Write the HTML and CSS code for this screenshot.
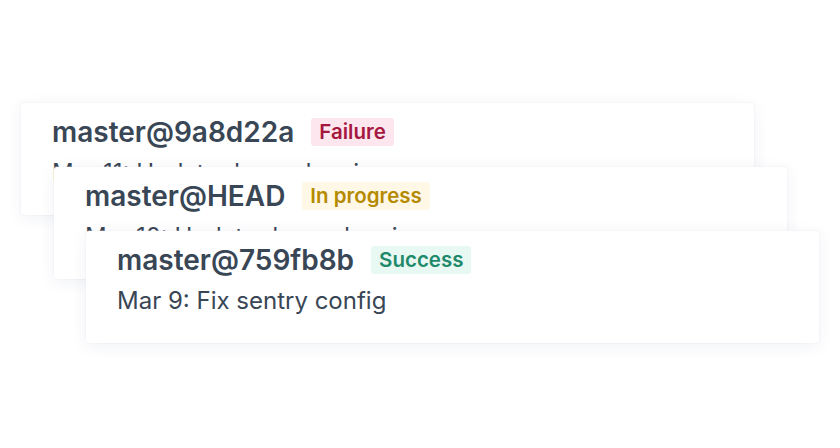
FILE: index.html
```html
<!DOCTYPE html>
<html>
<head>
<meta charset="utf-8">
<link rel="stylesheet" href="styles.css">
</head>
<body>
<div class="stack">
  <div class="card">
    <div class="row">
      <span class="title">master@9a8d22a</span>
      <span class="badge failure">Failure</span>
    </div>
    <div class="sub">Mar 11: Update dependencies</div>
  </div>
  <div class="card shift1">
    <div class="row">
      <span class="title">master@HEAD</span>
      <span class="badge progress">In progress</span>
    </div>
    <div class="sub">Mar 10: Update dependencies</div>
  </div>
  <div class="card shift2">
    <div class="row">
      <span class="title">master@759fb8b</span>
      <span class="badge success">Success</span>
    </div>
    <div class="sub">Mar 9: Fix sentry config</div>
  </div>
</div>
</body>
</html>
```
FILE: styles.css
```css
html, body {
  margin: 0;
  padding: 0;
  background: #ffffff;
}
body {
  width: 840px;
  height: 448px;
  overflow: hidden;
  font-family: Inter, "Liberation Sans", sans-serif;
  color: #394655;
}
.stack {
  display: flex;
  flex-direction: column;
  padding-top: 103px;
  padding-left: 21px;
}
.card {
  width: 733px;
  height: 112px;
  box-sizing: border-box;
  padding: 15px 31px 0;
  background: #ffffff;
  border-radius: 3px;
  box-shadow: 0 0 0 1px rgba(230, 232, 244, 0.25), 0 3px 16px rgba(40, 50, 110, 0.07);
}
.card + .card {
  margin-top: -48px;
}
.shift1 { margin-left: 33px; }
.shift2 { margin-left: 65px; }
.row {
  display: flex;
  align-items: center;
  gap: 17px;
  height: 28px;
}
.title {
  font-size: 28px;
  font-weight: 600;
  line-height: 28px;
}
.badge {
  font-size: 20.5px;
  font-weight: 600;
  line-height: 28px;
  padding: 0 8px;
  border-radius: 3px;
}
.failure { background: #fde6ed; color: #a5173f; }
.progress { background: #fff8e6; color: #b58a00; }
.success { background: #e8f8f3; color: #1f8a6b; }
.sub {
  margin-top: 13px;
  font-size: 24px;
  line-height: 28px;
  font-weight: 400;
}
```
